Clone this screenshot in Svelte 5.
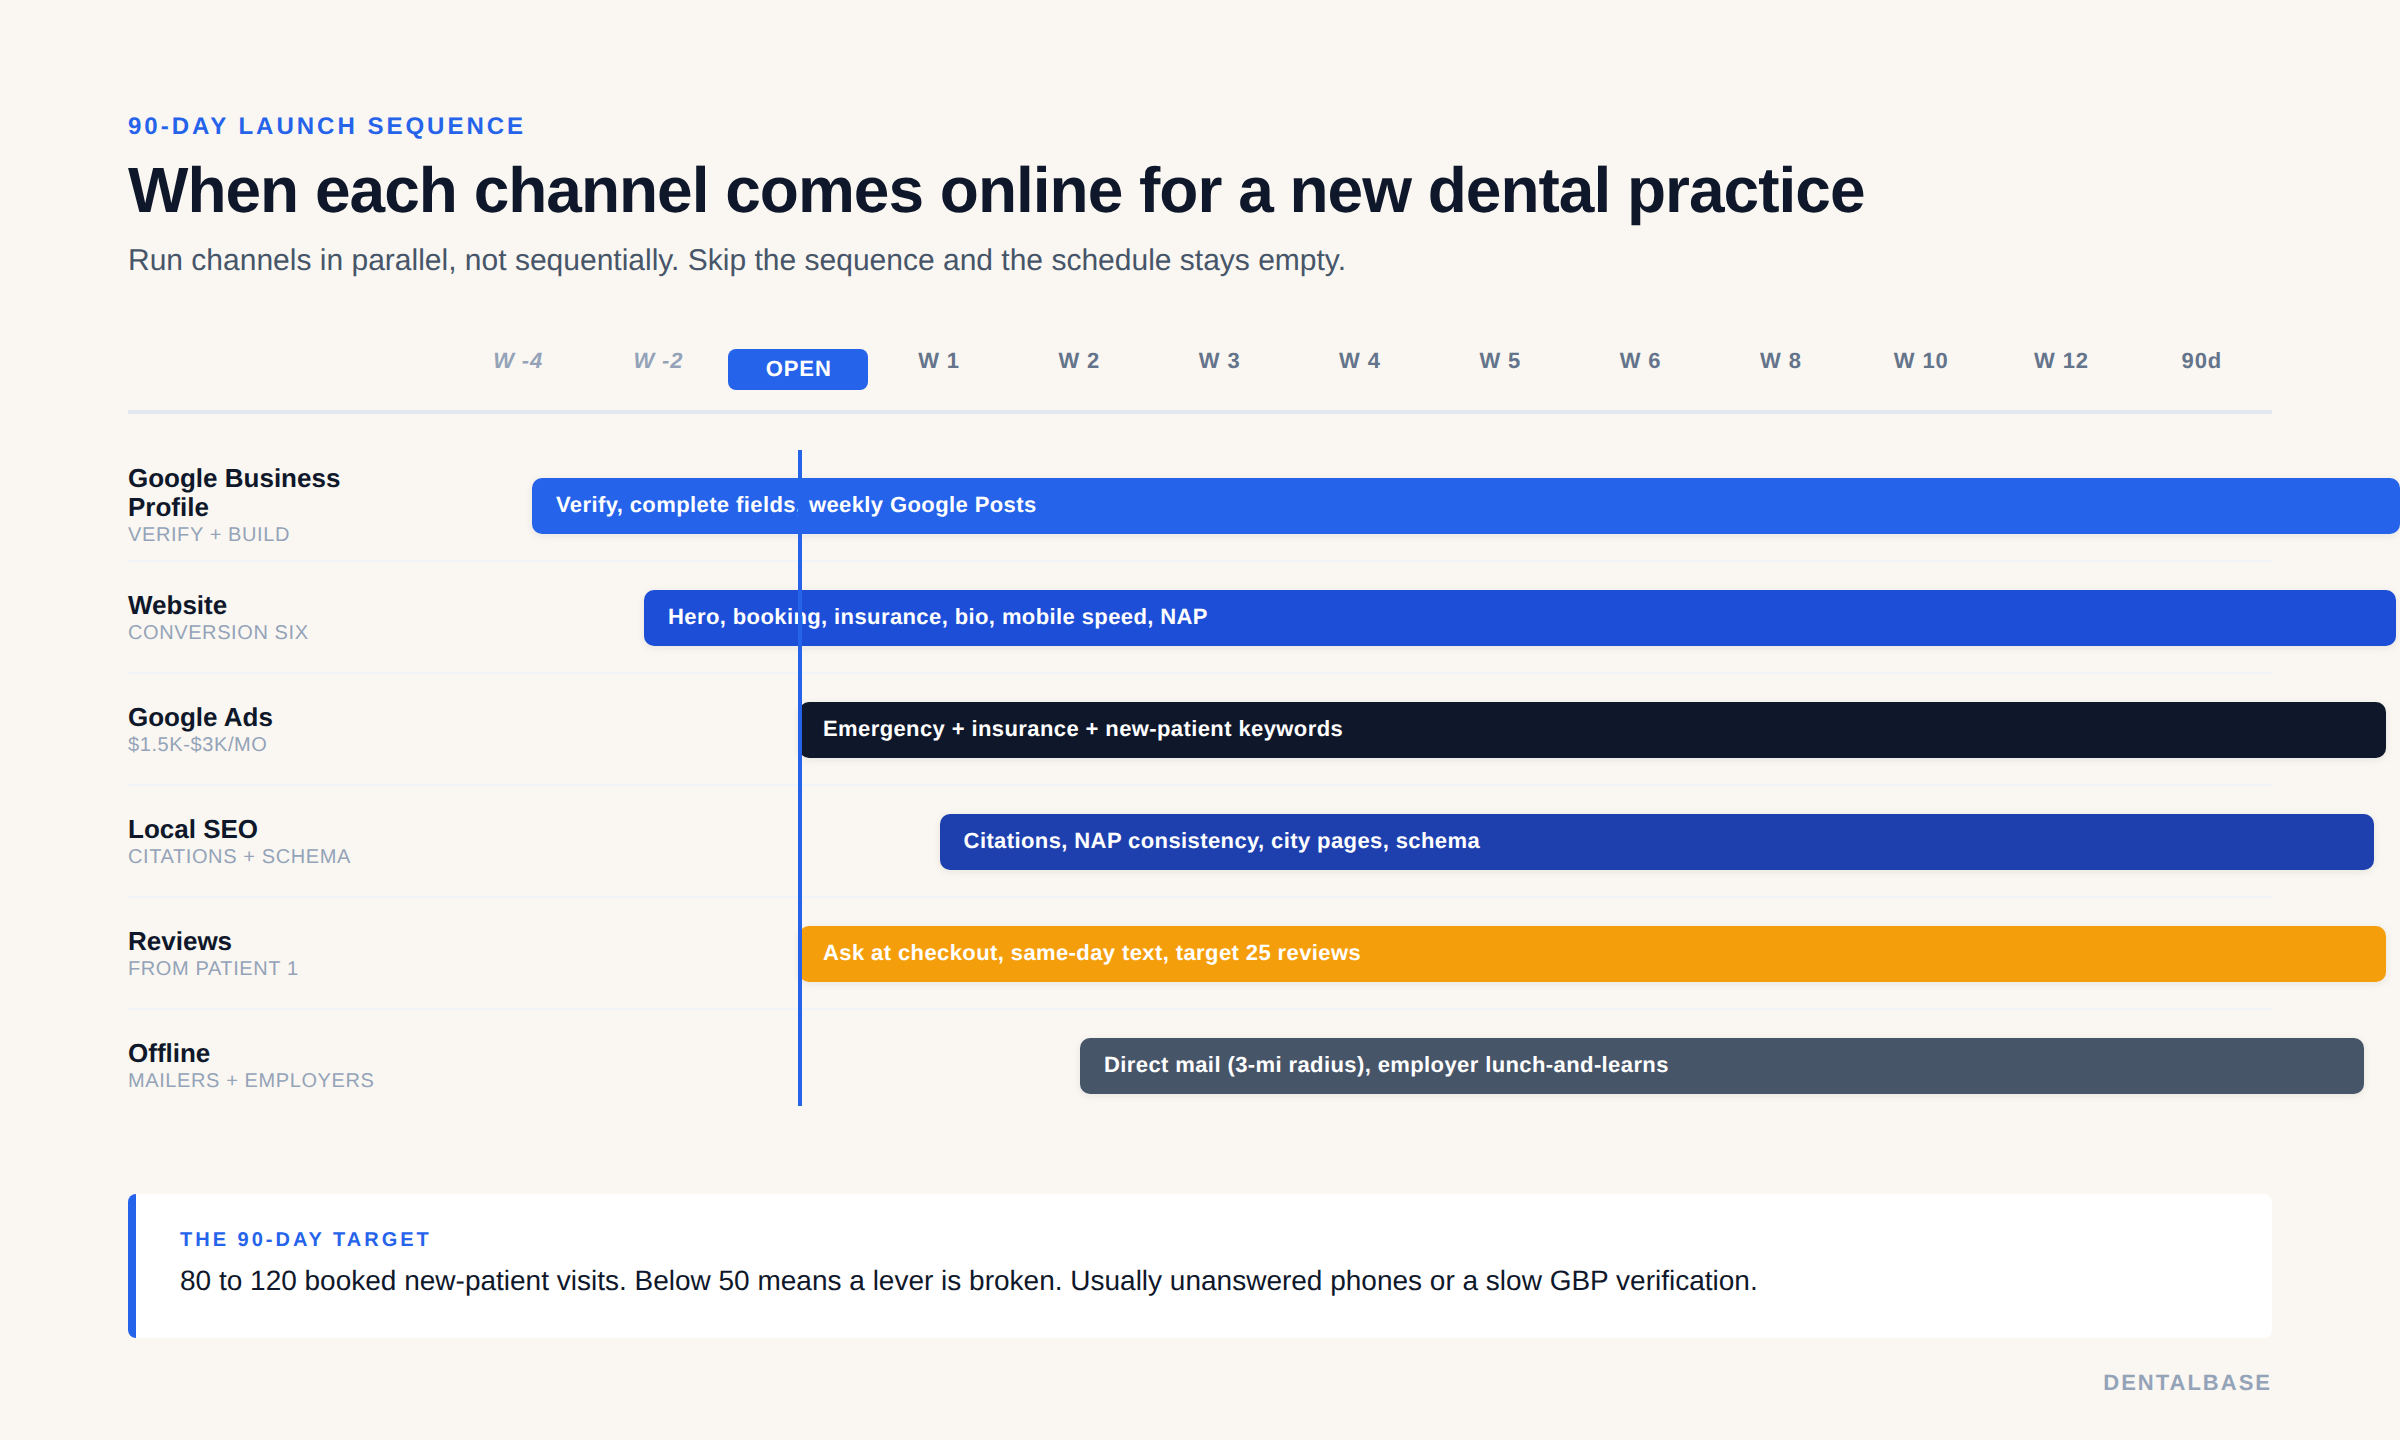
<script>
  const weeks = [
    { label: 'W -4', pre: true },
    { label: 'W -2', pre: true },
    { label: 'OPEN', open: true },
    { label: 'W 1' },
    { label: 'W 2' },
    { label: 'W 3' },
    { label: 'W 4' },
    { label: 'W 5' },
    { label: 'W 6' },
    { label: 'W 8' },
    { label: 'W 10' },
    { label: 'W 12' },
    { label: '90d' }
  ];

  // left and width are in px from the start of the track column
  const channels = [
    { name: 'Google Business Profile', sub: 'VERIFY + BUILD', bar: 'Verify, complete fields, weekly Google Posts', left: 84, width: 1868, color: '#2563eb' },
    { name: 'Website', sub: 'CONVERSION SIX', bar: 'Hero, booking, insurance, bio, mobile speed, NAP', left: 196, width: 1752, color: '#1d4ed8' },
    { name: 'Google Ads', sub: '$1.5K-$3K/MO', bar: 'Emergency + insurance + new-patient keywords', left: 351, width: 1587, color: '#0f172a' },
    { name: 'Local SEO', sub: 'CITATIONS + SCHEMA', bar: 'Citations, NAP consistency, city pages, schema', left: 491.6, width: 1434.4, color: '#1e40af' },
    { name: 'Reviews', sub: 'FROM PATIENT 1', bar: 'Ask at checkout, same-day text, target 25 reviews', left: 351, width: 1587, color: '#f59e0b' },
    { name: 'Offline', sub: 'MAILERS + EMPLOYERS', bar: 'Direct mail (3-mi radius), employer lunch-and-learns', left: 632, width: 1284, color: '#475569' }
  ];
</script>

<main class="page">
  <header class="head">
    <div class="eyebrow">90-DAY LAUNCH SEQUENCE</div>
    <h1>When each channel comes online for a new dental practice</h1>
    <p class="sub">Run channels in parallel, not sequentially. Skip the sequence and the schedule stays empty.</p>
  </header>

  <div class="axis">
    <div></div>
    {#each weeks as w}
      <div class="week" class:pre={w.pre} class:open={w.open}>{w.label}</div>
    {/each}
  </div>

  <div class="rows">
    <div class="today"></div>
    {#each channels as c}
      <div class="row">
        <div class="label">
          <div class="name">{c.name}</div>
          <div class="meta">{c.sub}</div>
        </div>
        <div class="track">
          <div class="bar" style="left: {c.left}px; width: {c.width}px; background: {c.color}">{c.bar}</div>
        </div>
      </div>
    {/each}
  </div>

  <section class="target">
    <div class="target-label">THE 90-DAY TARGET</div>
    <div class="target-text">80 to 120 booked new-patient visits. Below 50 means a lever is broken. Usually unanswered phones or a slow GBP verification.</div>
  </section>

  <footer class="brand">DENTALBASE</footer>
</main>

<style>
  :global(body) {
    background: #faf7f2;
    overflow: hidden;
  }

  .page {
    width: 2400px;
    height: 1440px;
    box-sizing: border-box;
    padding: 113px 128px 0;
    font-family: 'Liberation Sans', Arial, sans-serif;
    color: #0f172a;
    text-rendering: geometricPrecision;
    overflow: hidden;
  }

  .eyebrow {
    font-size: 24px;
    font-weight: 700;
    letter-spacing: 3px;
    color: #2563eb;
  }

  h1 {
    margin: 13px 0 0;
    font-size: 64px;
    line-height: 1.15;
    font-weight: 700;
    letter-spacing: -1px;
    color: #0f172a;
  }

  .sub {
    margin: 16px 0 0;
    font-size: 30px;
    color: #475569;
  }

  .axis {
    display: grid;
    grid-template-columns: 320px repeat(13, 1fr);
    margin-top: 71px;
    padding-bottom: 20px;
    border-bottom: 4px solid #e2e8f0;
  }

  .week {
    margin-top: -1px;
    text-align: center;
    font-size: 22px;
    font-weight: 700;
    letter-spacing: 0.88px;
    color: #64748b;
  }

  .week.pre {
    font-style: italic;
    color: #94a3b8;
  }

  .week.open {
    margin: 0 0.6px 0 -0.6px;
    padding: 7px 0 8px 1.2px;
    border-radius: 8px;
    background: #2563eb;
    color: #ffffff;
  }

  .rows {
    position: relative;
    margin-top: 36px;
  }

  .row {
    display: grid;
    grid-template-columns: 320px 1fr;
    align-items: center;
    box-sizing: border-box;
    height: 112px;
    padding-top: 2px;
    border-bottom: 2px solid #f1f5f9;
  }

  .row:last-child {
    padding-top: 0;
    border-bottom: none;
  }

  .label {
    padding-right: 40px;
  }

  .name {
    font-size: 26px;
    line-height: 29px;
    font-weight: 700;
    color: #0f172a;
  }

  .meta {
    margin-top: 2px;
    font-size: 20px;
    letter-spacing: 0.6px;
    color: #94a3b8;
  }

  .track {
    position: relative;
    height: 56px;
  }

  .bar {
    position: absolute;
    top: 0;
    box-sizing: border-box;
    height: 56px;
    padding-left: 24px;
    border-radius: 10px;
    font-size: 22px;
    font-weight: 700;
    letter-spacing: 0.4px;
    line-height: 54px;
    color: #ffffff;
    white-space: nowrap;
    box-shadow: 0 2px 8px rgba(15, 23, 42, 0.08);
  }

  .today {
    position: absolute;
    z-index: 1;
    top: 0;
    bottom: 16px;
    left: 670px;
    width: 4px;
    background: #2563eb;
  }

  .target {
    position: relative;
    margin-top: 72px;
    box-sizing: border-box;
    height: 144px;
    padding: 35px 52px;
    border-radius: 8px;
    background: #ffffff;
    overflow: hidden;
  }

  .target::before {
    content: '';
    position: absolute;
    top: 0;
    bottom: 0;
    left: 0;
    width: 8px;
    background: #2563eb;
  }

  .target-label {
    font-size: 20px;
    font-weight: 700;
    letter-spacing: 3px;
    color: #2563eb;
  }

  .target-text {
    margin-top: 13px;
    font-size: 28px;
    color: #0f172a;
  }

  .brand {
    margin-top: 32px;
    text-align: right;
    font-size: 22px;
    font-weight: 700;
    letter-spacing: 2px;
    color: #94a3b8;
  }
</style>
